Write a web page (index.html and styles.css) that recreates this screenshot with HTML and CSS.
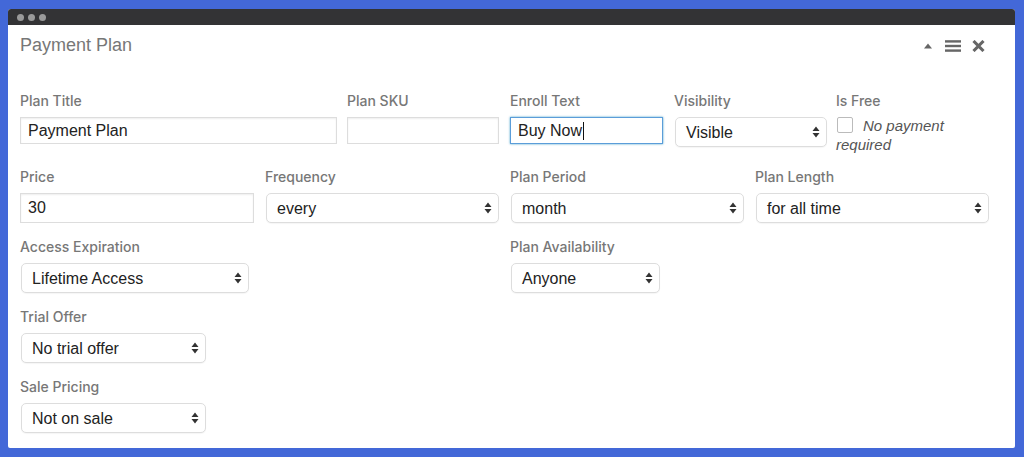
FILE: index.html
```html
<!DOCTYPE html>
<html>
<head>
<meta charset="utf-8">
<link rel="stylesheet" href="styles.css">
</head>
<body>
<div class="window">
  <div class="titlebar">
    <span class="dot"></span><span class="dot"></span><span class="dot"></span>
  </div>
  <div class="panel">
    <div class="panel-head">
      <h2 class="panel-title">Payment Plan</h2>
      <div class="tools">
        <svg class="ico-up" width="8" height="6" viewBox="0 0 8 6"><path d="M0 5.5 L4 0.5 L8 5.5 Z" fill="#666"/></svg>
        <svg class="ico-menu" width="16" height="12" viewBox="0 0 16 12"><rect x="0" y="0.2" width="16" height="2.4" fill="#666"/><rect x="0" y="4.8" width="16" height="2.4" fill="#666"/><rect x="0" y="9.4" width="16" height="2.4" fill="#666"/></svg>
        <svg class="ico-close" width="13" height="12" viewBox="0 0 13 12"><path d="M1.5 1 L11.5 11 M11.5 1 L1.5 11" stroke="#666" stroke-width="3.1" stroke-linecap="butt"/></svg>
      </div>
    </div>

    <div class="row row1">
      <div class="field f-title">
        <label class="lbl">Plan Title</label>
        <input class="txt" type="text" value="Payment Plan">
      </div>
      <div class="field f-sku">
        <label class="lbl">Plan SKU</label>
        <input class="txt" type="text" value="">
      </div>
      <div class="field f-enroll">
        <label class="lbl">Enroll Text</label>
        <div class="txt focus"><span>Buy Now</span><span class="caret"></span></div>
      </div>
      <div class="field f-vis">
        <label class="lbl">Visibility</label>
        <div class="sel w-full">Visible</div>
      </div>
      <div class="field f-free">
        <label class="lbl">Is Free</label>
        <div class="free"><span class="cb"></span><em>No payment required</em></div>
      </div>
    </div>

    <div class="row grid4">
      <div class="field">
        <label class="lbl">Price</label>
        <input class="txt tall" type="text" value="30">
      </div>
      <div class="field">
        <label class="lbl">Frequency</label>
        <div class="sel w-full">every</div>
      </div>
      <div class="field">
        <label class="lbl">Plan Period</label>
        <div class="sel w-full">month</div>
      </div>
      <div class="field">
        <label class="lbl">Plan Length</label>
        <div class="sel w-full">for all time</div>
      </div>
    </div>

    <div class="row grid4">
      <div class="field span2">
        <label class="lbl">Access Expiration</label>
        <div class="sel w-exp">Lifetime Access</div>
      </div>
      <div class="field span2">
        <label class="lbl">Plan Availability</label>
        <div class="sel w-avail">Anyone</div>
      </div>
    </div>

    <div class="row">
      <div class="field">
        <label class="lbl">Trial Offer</label>
        <div class="sel w-small">No trial offer</div>
      </div>
    </div>

    <div class="row">
      <div class="field">
        <label class="lbl">Sale Pricing</label>
        <div class="sel w-small">Not on sale</div>
      </div>
    </div>
  </div>
</div>
</body>
</html>
```

FILE: styles.css
```css
html, body {
  margin: 0;
  padding: 0;
}
body {
  background: #4368d8;
  width: 1024px;
  height: 457px;
  overflow: hidden;
  font-family: "Liberation Sans", Arial, sans-serif;
}
.window {
  margin: 9px 9px 0 8px;
  height: 439px;
  background: #fff;
  border-radius: 3px 3px 2px 2px;
  overflow: hidden;
  display: flex;
  flex-direction: column;
}
.titlebar {
  height: 17px;
  background: #333335;
  display: flex;
  align-items: center;
  padding-left: 9px;
  gap: 4px;
}
.dot {
  width: 7px;
  height: 7px;
  border-radius: 50%;
  background: #9a9a9a;
}
.panel {
  flex: 1;
  padding: 0 12px;
}
.panel-head {
  height: 41px;
  display: flex;
  align-items: center;
  justify-content: space-between;
}
.panel-title {
  margin: 0;
  font-size: 18px;
  font-weight: normal;
  color: #777;
}
.tools {
  display: flex;
  align-items: center;
  margin-right: 18px;
}
.ico-up { margin-right: 13px; margin-top: 1px; }
.ico-menu { margin-right: 11px; }
.row {
  display: flex;
  margin-bottom: 15px;
}
.row1 {
  margin-top: 26px;
  margin-bottom: 14px;
}
.field {
  display: flex;
  flex-direction: column;
}
.lbl {
  font-family: Inter, "Liberation Sans", Arial, sans-serif;
  font-size: 14px;
  line-height: 17px;
  font-weight: 500;
  color: #777;
  margin-bottom: 8px;
}
.f-title { width: 317px; margin-right: 10px; }
.f-sku { width: 152px; margin-right: 11px; }
.f-enroll { width: 153px; margin-right: 11px; }
.f-vis { width: 153px; margin-right: 9px; }
.f-free { width: 153px; }
.f-vis .sel { margin-left: 1px; width: 152px; }
.txt {
  box-sizing: border-box;
  height: 27px;
  margin: 0;
  border: 1px solid #ddd;
  box-shadow: inset 0 1px 2px rgba(0,0,0,0.07);
  padding: 0 7px;
  font-family: "Liberation Sans", Arial, sans-serif;
  font-size: 16px;
  color: #222;
  background: #fff;
  outline: none;
  width: 100%;
  display: flex;
  align-items: center;
}
.txt.tall { height: 30px; }
.txt.focus {
  border-color: #5b9dd9;
  box-shadow: 0 0 2px rgba(30,140,190,0.8);
}
.caret {
  display: inline-block;
  width: 1px;
  height: 18px;
  background: #111;
  margin-left: 1px;
}
.sel {
  box-sizing: border-box;
  height: 30px;
  border: 1px solid #ddd;
  border-radius: 5px;
  box-shadow: 0 1px 1px rgba(0,0,0,0.04);
  padding: 0 24px 0 10px;
  font-size: 16px;
  line-height: 30px;
  color: #222;
  background: #fff url("data:image/svg+xml;utf8,<svg xmlns='http://www.w3.org/2000/svg' width='8' height='12' viewBox='0 0 8 12'><path d='M0.5 5 L4 0.5 L7.5 5 Z M0.5 7 L4 11.5 L7.5 7 Z' fill='%23333'/></svg>") no-repeat right 6px center;
  white-space: nowrap;
}
.grid4 {
  display: grid;
  grid-template-columns: repeat(4, 234px);
  column-gap: 11px;
}
.grid4 .sel { margin-left: 1px; }
.span2 { grid-column: span 2; }
.w-full { width: 233px; }
.w-exp { width: 228px; }
.w-avail { width: 149px; }
.w-small { width: 185px; margin-left: 1px; }
.free {
  position: relative;
  font-size: 15px;
  line-height: 19px;
  color: #555;
  text-indent: 27px;
  margin-top: -1px;
}
.cb {
  position: absolute;
  left: 1px;
  top: 1px;
  width: 16px;
  height: 16px;
  box-sizing: border-box;
  border: 1px solid #bbb;
  border-radius: 2px;
  background: #fff;
  text-indent: 0;
}
.free em { font-style: italic; }
```
